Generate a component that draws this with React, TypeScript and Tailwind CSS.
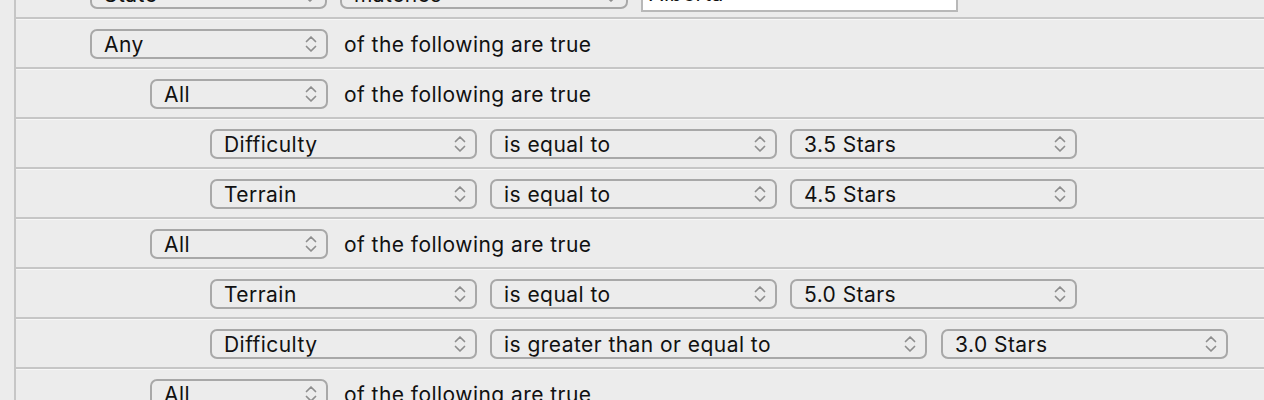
import React from "react";

const Chevrons = () => (
  <svg width="12" height="18" viewBox="0 0 12 18" fill="none" stroke="#8e8e8e" strokeWidth="1.7" strokeLinecap="round" strokeLinejoin="round">
    <path d="M1.5 6.5 L6 2 L10.5 6.5" />
    <path d="M1.5 11.5 L6 16 L10.5 11.5" />
  </svg>
);

const Popup = ({ label, w }: { label: string; w: string }) => (
  <div className={`${w} h-[30px] shrink-0 border-2 border-[#a8a8a8] rounded-[7px] flex items-center justify-between pl-[12px] pr-[9px]`}>
    <span className="leading-none text-[#111111] pt-[1px]">{label}</span>
    <Chevrons />
  </div>
);

const Row = ({ children, indent }: { children: React.ReactNode; indent: string }) => (
  <div className={`h-[50px] border-t border-t-[#f7f7f7] border-b-2 border-b-[#c6c6c6] flex items-center ${indent}`}>
    {children}
  </div>
);

const Label = () => <span className="ml-[16px] text-[#111111] leading-none pt-[1px]">of the following are true</span>;

export default function App() {
  return (
    <div className="w-[1264px] h-[400px] overflow-hidden bg-[#ececec] text-[21px] tracking-[0.45px]" style={{ fontFamily: "Inter, 'Noto Sans', sans-serif" }}>
      <div className="flex -mt-[31px]">
        <div className="w-[14px] shrink-0" />
        <div className="w-[2px] shrink-0 bg-[#c6c6c6]" />
        <div className="flex-1 flex flex-col">
          <Row indent="pl-[74px]">
            <Popup label="State" w="w-[237px]" />
            <div className="ml-[13px]"><Popup label="matches" w="w-[288px]" /></div>
            <div className="ml-[13px] w-[317px] h-[36px] bg-white border-2 border-[#b8b8b8] flex items-center pl-[6px] text-[#111111]">Alberta</div>
          </Row>
          <Row indent="pl-[74px]">
            <Popup label="Any" w="w-[238px]" />
            <Label />
          </Row>
          <Row indent="pl-[134px]">
            <Popup label="All" w="w-[178px]" />
            <Label />
          </Row>
          <Row indent="pl-[194px]">
            <Popup label="Difficulty" w="w-[267px]" />
            <div className="ml-[13px]"><Popup label="is equal to" w="w-[287px]" /></div>
            <div className="ml-[13px]"><Popup label="3.5 Stars" w="w-[287px]" /></div>
          </Row>
          <Row indent="pl-[194px]">
            <Popup label="Terrain" w="w-[267px]" />
            <div className="ml-[13px]"><Popup label="is equal to" w="w-[287px]" /></div>
            <div className="ml-[13px]"><Popup label="4.5 Stars" w="w-[287px]" /></div>
          </Row>
          <Row indent="pl-[134px]">
            <Popup label="All" w="w-[178px]" />
            <Label />
          </Row>
          <Row indent="pl-[194px]">
            <Popup label="Terrain" w="w-[267px]" />
            <div className="ml-[13px]"><Popup label="is equal to" w="w-[287px]" /></div>
            <div className="ml-[13px]"><Popup label="5.0 Stars" w="w-[287px]" /></div>
          </Row>
          <Row indent="pl-[194px]">
            <Popup label="Difficulty" w="w-[267px]" />
            <div className="ml-[13px]"><Popup label="is greater than or equal to" w="w-[437px]" /></div>
            <div className="ml-[14px]"><Popup label="3.0 Stars" w="w-[287px]" /></div>
          </Row>
          <Row indent="pl-[134px]">
            <Popup label="All" w="w-[178px]" />
            <Label />
          </Row>
        </div>
      </div>
    </div>
  );
}
